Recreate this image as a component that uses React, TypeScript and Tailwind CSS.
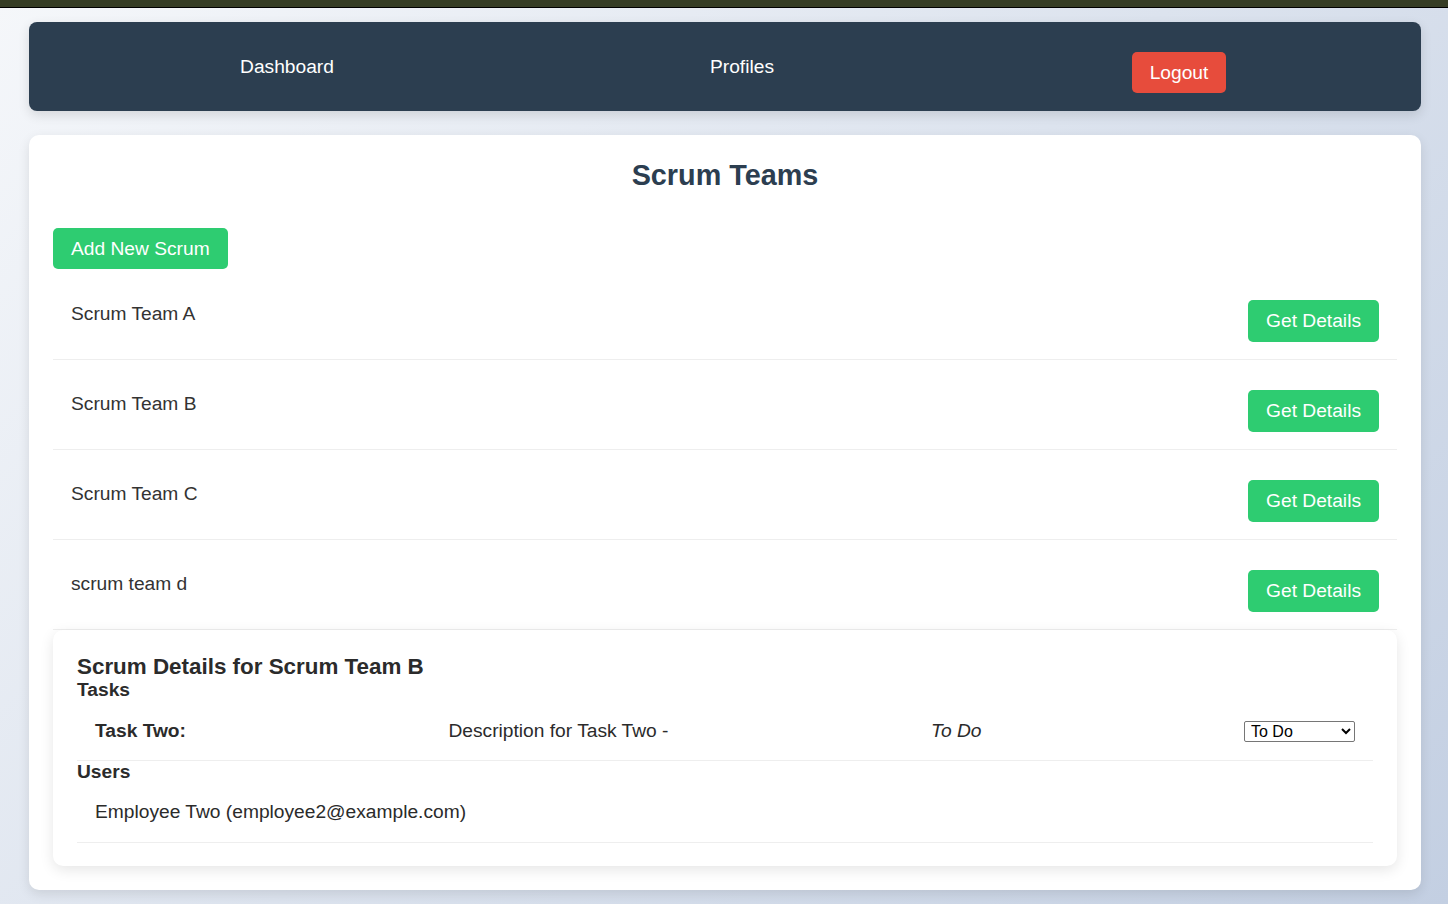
const teams = [
  { id: 1, name: 'Scrum Team A' },
  { id: 2, name: 'Scrum Team B' },
  { id: 3, name: 'Scrum Team C' },
  { id: 4, name: 'scrum team d' },
];

const tasks = [
  { id: 2, title: 'Task Two', description: 'Description for Task Two', status: 'To Do' },
];

const users = [{ id: 2, name: 'Employee Two', email: 'employee2@example.com' }];

const Navbar = () => {
  return (
    <nav className="flex items-start rounded-lg bg-[#2c3e50] pt-[30px] pb-[18px] text-white shadow-[0_4px_12px_rgba(0,0,0,0.12)]">
      <div className="ml-[158px] w-[200px] text-center text-[19.2px] leading-[29px]">Dashboard</div>
      <div className="ml-[255px] w-[200px] text-center text-[19.2px] leading-[29px]">Profiles</div>
      <div className="ml-[237px] flex w-[200px] justify-center">
        <button className="rounded-[5px] bg-[#e74c3c] px-[18px] py-[10px] text-[19.2px] leading-[21px] text-white">
          Logout
        </button>
      </div>
    </nav>
  );
};

const ScrumRow = ({ name }: { name: string }) => {
  return (
    <li className="flex items-start justify-between border-b border-[#eeeeee] px-[18px] pt-[30px] pb-[17px]">
      <span className="mt-[3px] text-[19.2px] leading-[22px] text-[#333]">{name}</span>
      <button className="rounded-[5px] bg-[#2ecc71] px-[18px] py-[10px] text-[19.2px] leading-[22px] text-white">
        Get Details
      </button>
    </li>
  );
};

const ScrumDetails = ({ teamName }: { teamName: string }) => {
  return (
    <div className="rounded-[10px] bg-white px-[24px] pt-[24px] pb-[23px] text-[#2b2b2b] shadow-[0_4px_14px_rgba(0,0,0,0.1)]">
      <h3 className="text-[22.4px] font-bold leading-[25px]">Scrum Details for {teamName}</h3>
      <h4 className="text-[19.2px] font-bold leading-[21px]">Tasks</h4>
      <ul>
        {tasks.map((task) => (
          <li
            key={task.id}
            className="flex items-center justify-between border-b border-[#eeeeee] px-[18px] pt-[20px] pb-[18px] text-[19.2px] leading-[22px]"
          >
            <strong>{task.title}:</strong>
            <span>{task.description} -</span>
            <em>{task.status}</em>
            <select
              defaultValue="To Do"
              className="h-[21px] w-[111px] rounded-[2px] border border-[#767676] bg-white pl-[2px] text-[16px] leading-[18px] text-black"
            >
              <option>To Do</option>
              <option>In Progress</option>
              <option>Done</option>
            </select>
          </li>
        ))}
      </ul>
      <h4 className="text-[19.2px] font-bold leading-[21px]">Users</h4>
      <ul>
        {users.map((user) => (
          <li
            key={user.id}
            className="border-b border-[#eeeeee] px-[18px] py-[19px] text-[19.2px] leading-[22px]"
          >
            {user.name} ({user.email})
          </li>
        ))}
      </ul>
    </div>
  );
};

const App = () => {
  return (
    <div className="min-h-[904px] bg-[linear-gradient(135deg,#f5f7fa_0%,#c3cfe2_100%)] font-['Liberation_Sans',Arial,sans-serif]">
      <div className="h-[8px] border-b border-black bg-[#363d25]" />
      <div className="pt-[14px] pr-[27px] pb-[14px] pl-[29px]">
        <Navbar />
        <section className="mt-[24px] rounded-[10px] bg-white p-[24px] shadow-[0_4px_12px_rgba(0,0,0,0.1)]">
          <h2 className="text-center text-[28.8px] font-bold leading-[33px] text-[#2c3e50]">Scrum Teams</h2>
          <button className="mt-[36px] mb-[1px] rounded-[5px] bg-[#2ecc71] px-[18px] py-[10px] text-[19.2px] leading-[21px] text-white">
            Add New Scrum
          </button>
          <ul>
            {teams.map((team) => (
              <ScrumRow key={team.id} name={team.name} />
            ))}
          </ul>
          <ScrumDetails teamName="Scrum Team B" />
        </section>
      </div>
    </div>
  );
};

export default App;
